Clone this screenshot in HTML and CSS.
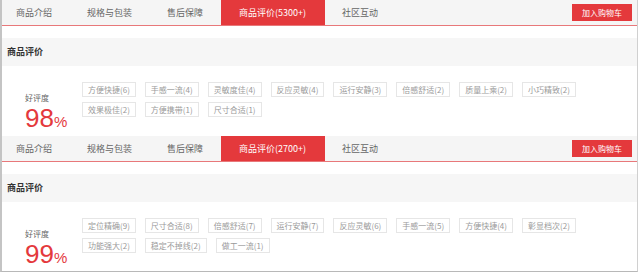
FILE: index.html
```html
<!DOCTYPE html>
<html lang="zh-CN">
<head>
<meta charset="utf-8">
<link rel="stylesheet" href="styles.css">
</head>
<body>
<section class="panel">
  <div class="tabbar">
    <ul class="tabs">
      <li class="tab">商品介绍</li>
      <li class="tab">规格与包装</li>
      <li class="tab">售后保障</li>
      <li class="tab active">商品评价(5300+)</li>
      <li class="tab">社区互动</li>
    </ul>
    <button class="cart">加入购物车</button>
  </div>
  <div class="section-head">商品评价</div>
  <div class="review">
    <div class="rate">
      <div class="rate-label">好评度</div>
      <div class="rate-num">98<span class="pct">%</span></div>
    </div>
    <div class="tags">
      <span class="tag">方便快捷(6)</span>
      <span class="tag">手感一流(4)</span>
      <span class="tag">灵敏度佳(4)</span>
      <span class="tag">反应灵敏(4)</span>
      <span class="tag">运行安静(3)</span>
      <span class="tag">倍感舒适(2)</span>
      <span class="tag">质量上乘(2)</span>
      <span class="tag">小巧精致(2)</span>
      <span class="tag">效果极佳(2)</span>
      <span class="tag">方便携带(1)</span>
      <span class="tag">尺寸合适(1)</span>
    </div>
  </div>
</section>
<section class="panel panel-last">
  <div class="tabbar">
    <ul class="tabs">
      <li class="tab">商品介绍</li>
      <li class="tab">规格与包装</li>
      <li class="tab">售后保障</li>
      <li class="tab active">商品评价(2700+)</li>
      <li class="tab">社区互动</li>
    </ul>
    <button class="cart">加入购物车</button>
  </div>
  <div class="section-head">商品评价</div>
  <div class="review">
    <div class="rate">
      <div class="rate-label">好评度</div>
      <div class="rate-num">99<span class="pct">%</span></div>
    </div>
    <div class="tags">
      <span class="tag">定位精确(9)</span>
      <span class="tag">尺寸合适(8)</span>
      <span class="tag">倍感舒适(7)</span>
      <span class="tag">运行安静(7)</span>
      <span class="tag">反应灵敏(6)</span>
      <span class="tag">手感一流(5)</span>
      <span class="tag">方便快捷(4)</span>
      <span class="tag">彰显档次(2)</span>
      <span class="tag">功能强大(2)</span>
      <span class="tag">稳定不掉线(2)</span>
      <span class="tag">做工一流(1)</span>
    </div>
  </div>
</section>
</body>
</html>
```
FILE: styles.css
```css
* { box-sizing: border-box; }
html, body { margin: 0; padding: 0; background: #fff; }
body {
  width: 640px;
  height: 272px;
  overflow: hidden;
  font-family: "Noto Sans CJK SC", "Liberation Sans", sans-serif;
}
.panel {
  width: 638px;
  height: 136px;
  display: flex;
  flex-direction: column;
  border-left: 2px solid #c4c4c4;
  border-right: 1px solid #d0d0d0;
}
.panel-last {
  border-bottom: 1px solid #b8b8b8;
}
.tabbar {
  flex: none;
  display: flex;
  align-items: center;
  justify-content: space-between;
  height: 26px;
  background: #f5f5f5;
  border-bottom: 1px solid #e8787a;
}
.tabs {
  display: flex;
  margin: 0;
  padding: 0;
  list-style: none;
  height: 25px;
}
.tab {
  padding: 0 17.5px;
  font-size: 9px;
  line-height: 25px;
  height: 25px;
  color: #666;
  white-space: nowrap;
}
.tab:first-child { padding-left: 14px; }
.tab.active {
  background: #e4393c;
  color: #fff;
  width: 104px;
  padding: 0;
  text-align: center;
}
.cart {
  margin: 0 5px 0 0;
  height: 17px;
  width: 60px;
  padding: 0;
  border: none;
  background: #e4393c;
  color: #fff;
  font-family: "Noto Sans CJK SC", sans-serif;
  font-size: 8px;
  line-height: 17px;
}
.section-head {
  flex: none;
  margin-top: 12px;
  height: 28px;
  background: #f6f6f6;
  padding-left: 5px;
  font-size: 9px;
  font-weight: bold;
  line-height: 28px;
  color: #333;
}
.review {
  flex: 1;
  min-height: 0;
  display: flex;
  padding-top: 16px;
}
.rate {
  width: 80px;
  padding-left: 23px;
  padding-top: 10px;
}
.rate-label {
  font-size: 8px;
  line-height: 12px;
  height: 12px;
  color: #666;
}
.rate-num {
  margin-top: 1px;
  height: 26px;
  font-family: "Liberation Sans", Arial, sans-serif;
  font-size: 26px;
  line-height: 26px;
  color: #e4393c;
  white-space: nowrap;
}
.pct { font-size: 15px; line-height: 15px; }
.tags {
  width: 512px;
  display: flex;
  flex-wrap: wrap;
  align-content: flex-start;
  gap: 5px 9px;
}
.tag {
  display: block;
  height: 15px;
  padding: 0 5px;
  border: 1px solid #e6e6e6;
  font-size: 8px;
  line-height: 13px;
  color: #9a9a9a;
  white-space: nowrap;
}
```
